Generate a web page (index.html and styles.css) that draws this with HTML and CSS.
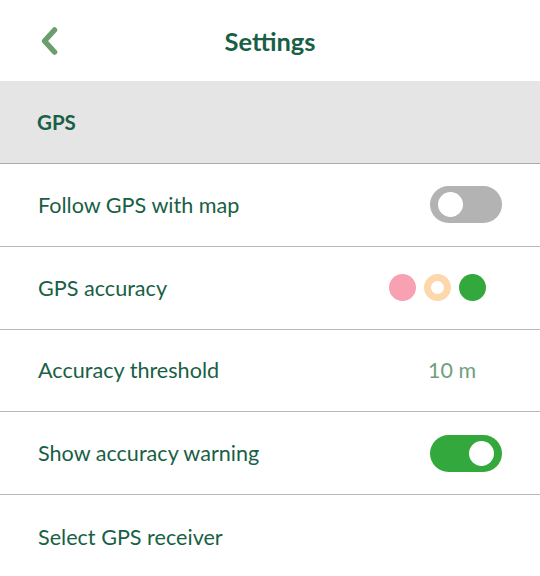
FILE: index.html
```html
<!DOCTYPE html>
<html>
<head>
<meta charset="utf-8">
<link rel="stylesheet" href="styles.css">
</head>
<body>
<div class="app">
  <header class="topbar">
    <button class="back" aria-label="Back">
      <svg width="24" height="30" viewBox="0 0 24 30"><path d="M16.5 4 L6.5 15 L16.5 26" fill="none" stroke="#6a9e6e" stroke-width="5.5" stroke-linecap="round" stroke-linejoin="round"/></svg>
    </button>
    <h1 class="title">Settings</h1>
  </header>
  <div class="section">GPS</div>
  <div class="row">
    <span class="label">Follow GPS with map</span>
    <span class="toggle off"><span class="knob"></span></span>
  </div>
  <div class="row">
    <span class="label">GPS accuracy</span>
    <span class="dots">
      <span class="dot pink"></span>
      <span class="dot ring"></span>
      <span class="dot green"></span>
    </span>
  </div>
  <div class="row">
    <span class="label">Accuracy threshold</span>
    <span class="value">10 m</span>
  </div>
  <div class="row">
    <span class="label">Show accuracy warning</span>
    <span class="toggle on"><span class="knob"></span></span>
  </div>
  <div class="row last">
    <span class="label">Select GPS receiver</span>
  </div>
</div>
</body>
</html>
```
FILE: styles.css
```css
* { box-sizing: border-box; }
html, body { margin: 0; padding: 0; background: #fff; }
body { font-family: Lato, "Open Sans", sans-serif; color: #195f45; }
.app { width: 540px; height: 576px; overflow: hidden; }
.topbar {
  height: 81px;
  position: relative;
  display: flex;
  align-items: center;
  justify-content: center;
}
.back {
  position: absolute;
  left: 38px;
  top: 26px;
  border: 0;
  background: none;
  padding: 0;
  width: 24px;
  height: 30px;
}
.back svg { display: block; }
.title {
  margin: 0;
  font-size: 25.5px;
  font-weight: 700;
  color: #195f45;
}
.section {
  height: 83px;
  background: #e5e5e5;
  border-bottom: 1px solid #a9a9a9;
  display: flex;
  align-items: center;
  padding-left: 37px;
  font-size: 20.5px;
  font-weight: 700;
  color: #195f45;
}
.row {
  height: 82.8px;
  border-bottom: 1px solid #b8b8b8;
  display: flex;
  align-items: center;
  justify-content: space-between;
  padding: 0 38px 0 38px;
}
.row.last { border-bottom: 0; }
.label { font-size: 21.6px; color: #195f45; }
.toggle {
  width: 72px;
  height: 37px;
  border-radius: 19px;
  display: flex;
  align-items: center;
  padding: 0 8px;
}
.toggle.off { background: #b3b3b3; justify-content: flex-start; }
.toggle.on { background: #33a83c; justify-content: flex-end; }
.knob { width: 25px; height: 25px; border-radius: 50%; background: #fff; }
.dots { display: flex; gap: 8px; margin-right: 16px; }
.dot { width: 27px; height: 27px; border-radius: 50%; }
.dot.pink { background: #f8a1b3; }
.dot.ring { background: #fff; border: 7.5px solid #fdd8ad; }
.dot.green { background: #33a83c; }
.value { font-size: 21.4px; color: #6e9f7c; margin-right: 26px; }
```
